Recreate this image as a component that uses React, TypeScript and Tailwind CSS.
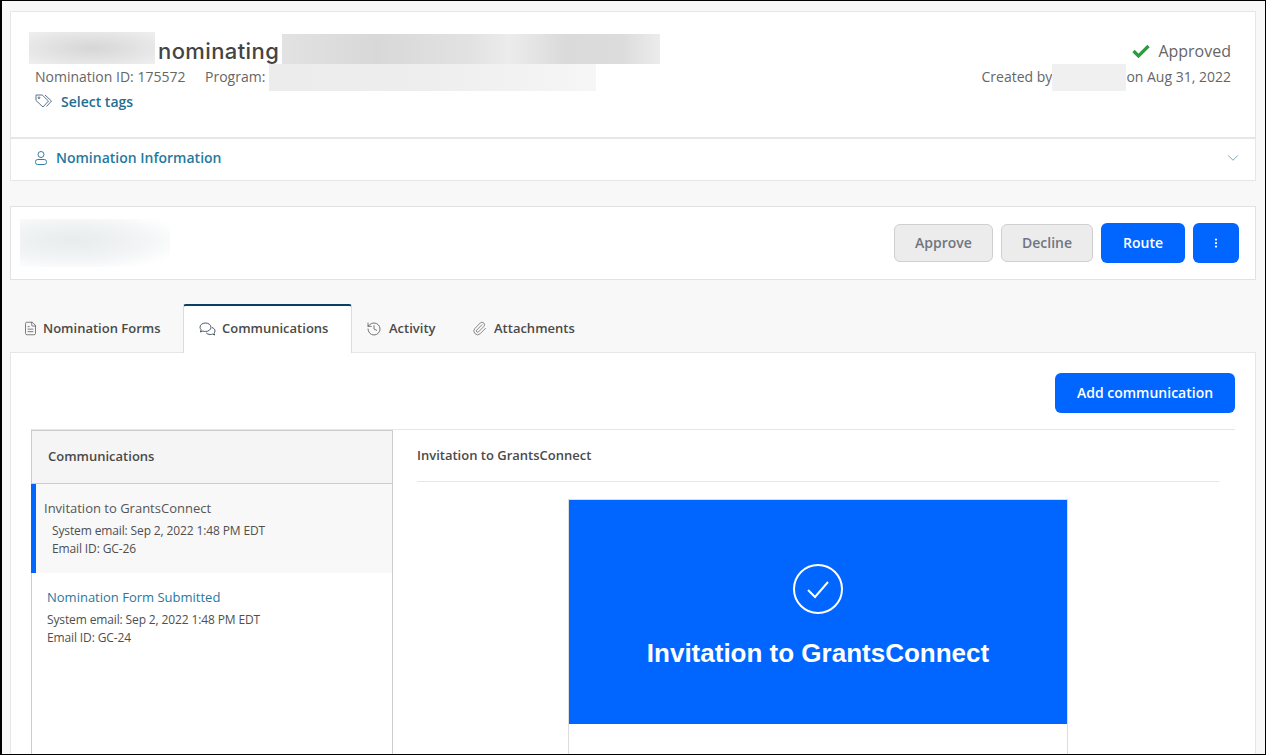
import { ChevronDown, EllipsisVertical, FileText, History, Paperclip } from "lucide-react";

const font = { fontFamily: '"Open Sans", "Noto Sans", sans-serif' };

const ChatIcon = () => (
  <svg width="17" height="14" viewBox="0 0 17 14" fill="none" stroke="#4b5563" strokeWidth="1">
    <path d="M6.5 1C3.5 1 1 2.9 1 5.2c0 1 .5 1.900 1.200 2.600L1.400 10l2.500-1c.8.3 1.700.5 2.600.5 3 0 5.500-1.900 5.500-4.200S9.500 1 6.500 1z" />
    <path d="M13 5.500c1.700.6 3 1.900 3 3.400 0 .9-.4 1.700-1 2.300l.7 1.800-2.200-.9c-.7.3-1.500.4-2.300.4-1.700 0-3.200-.7-4-1.700" />
  </svg>
);

const PersonIcon = () => (
  <svg width="12" height="14" viewBox="0 0 12 14" fill="none" stroke="#2f7fa3" strokeWidth="1" className="mr-[9px] mt-[1px]">
    <circle cx="6" cy="3.500" r="3" />
    <rect x="0.500" y="8.500" width="11" height="5" rx="2.200" />
  </svg>
);

const TagIcon = () => (
  <svg width="18" height="14" viewBox="0 0 18 14" fill="none" stroke="#5b7488" strokeWidth="1" className="mr-[8px]">
    <path d="M1 1h6.200l6.300 6-5.500 6L1 6.500z" />
    <path d="M10 1l6.500 6-5 5.500" />
    <circle cx="4" cy="3.800" r="0.900" />
  </svg>
);

const Tab = ({ icon, label, className }: { icon: React.ReactNode; label: string; className: string }) => (
  <div className={`flex items-center text-[13px] font-semibold text-[#4a4a4a] ${className}`}>
    {icon}
    <span>{label}</span>
  </div>
);

const Mail = ({ title, id, offset, active }: { title: string; id: string; offset: string; active?: boolean }) => (
  <div className={active ? "-ml-[1px] h-[89px] border-l-[5px] border-[#0066ff] bg-[#f8f8f8] pl-[8px] pt-[14px]" : "h-[89px] pl-[15px] pt-[14px]"}>
    <div className={active ? "text-[13px] leading-[20px] text-[#555]" : "text-[13px] leading-[20px] text-[#1f7a9e]"}>{title}</div>
    <div className={`mt-[4px] text-[12px] leading-[18px] tracking-[-0.13px] text-[#4f4f4f] ${offset}`}>
      <div>System email: Sep 2, 2022 1:48 PM EDT</div>
      <div>Email ID: {id}</div>
    </div>
  </div>
);

export default function App() {
  return (
    <div style={font} className="h-screen overflow-hidden border border-l-2 border-black bg-[#f8f8f8] pl-[8px] pr-[9px] pt-[10px]">
      <div className="h-[127px] border border-[#e6e6e6] bg-white pl-[18px] pr-[24px] pt-[20px]">
        <div className="flex justify-between">
          <div>
            <div className="flex h-[32px] items-end">
              <div className="h-[32px] w-[126px] bg-[radial-gradient(ellipse_at_center,#d6d6d6,#efefef)]" />
              <span style={{ fontFamily: "Inter, sans-serif" }} className="ml-[3px] w-[124px] text-[22px] font-medium leading-[26px] tracking-[0.4px] text-[#444]">nominating</span>
              <div className="h-[30px] w-[378px] bg-[linear-gradient(90deg,#e2e2e2,#d8d8d8_25%,#e2e2e2_50%,#ececec_60%,#dadada_75%,#dcdcdc_90%,#ececec)]" />
            </div>
            <div className="flex h-[27px] items-center pb-[2px] pl-[6px] text-[14px] text-[#666]">
              <span className="w-[170px]">Nomination ID: 175572</span>
              <span className="w-[64px]">Program:</span>
              <div className="-mb-[2px] h-[27px] w-[327px] bg-gradient-to-r from-[#ececec] via-[#eeeeee] to-[#f6f6f6]" />
            </div>
            <div className="flex h-[22px] items-center pb-[2px] pl-[6px] text-[14px] font-semibold text-[#1f6f91]">
              <TagIcon />
              Select tags
            </div>
          </div>
          <div className="flex flex-col items-end">
            <div className="flex h-[32px] items-center pt-[6px] text-[16px] text-[#666]">
              <svg width="18" height="14" viewBox="0 0 18 14" fill="none" stroke="#2a9d3f" strokeWidth="3.200" className="mr-[8px]">
                <path d="M1.500 7l5 5L16.500 2" />
              </svg>
              Approved
            </div>
            <div className="flex h-[27px] items-center pb-[2px] text-[14px] text-[#666]">
              <span>Created by</span>
              <div className="-mb-[2px] h-[27px] w-[74px] bg-[#f0f0f0]" />
              <span>on Aug 31, 2022</span>
            </div>
          </div>
        </div>
      </div>

      <div className="flex h-[43px] items-center justify-between border border-[#e6e6e6] bg-white pb-[5px] pl-[24px] pr-[13px]">
        <div className="flex items-center text-[14px] font-semibold text-[#1f7a9e]">
          <PersonIcon />
          Nomination Information
        </div>
        <ChevronDown size={18} strokeWidth={1} className="mt-[2px] text-[#3f8f9f]" />
      </div>

      <div className="mt-[25px] flex h-[74px] items-center justify-between border border-[#e2e2e2] bg-white pl-[9px] pr-[16px]">
        <div className="h-[48px] w-[150px] bg-[radial-gradient(ellipse_at_35%_45%,#e8ecee,#f2f4f5_50%,#ffffff_85%)]" />
        <div className="flex items-center gap-[8px] text-[14px] font-semibold">
          <button className="h-[38px] w-[99px] rounded-[6px] border border-[#cfcfcf] bg-[#ececec] pb-[2px] text-[#6f7680]">Approve</button>
          <button className="h-[38px] w-[92px] rounded-[6px] border border-[#cfcfcf] bg-[#ececec] pb-[2px] text-[#6f7680]">Decline</button>
          <button className="h-[40px] w-[84px] rounded-[6px] bg-[#0066ff] pb-[2px] text-white">Route</button>
          <button className="flex h-[40px] w-[46px] items-center justify-center rounded-[6px] bg-[#0066ff] text-white">
            <EllipsisVertical size={12} strokeWidth={2.5} />
          </button>
        </div>
      </div>

      <div className="mt-[24px] flex h-[48px] items-stretch">
        <Tab className="w-[173px] pl-[13px] pt-[1px]" label="Nomination Forms" icon={<FileText size={15} strokeWidth={1.2} className="mr-[5px] text-[#555]" />} />
        <Tab className="relative z-10 -mb-[1px] w-[169px] rounded-t-[3px] border border-b-0 border-t-[2px] border-[#dcdcdc] border-t-[#0b3f66] bg-white pb-[2px] pl-[15px]" label="Communications" icon={<span className="mr-[6px]"><ChatIcon /></span>} />
        <Tab className="w-[106px] pl-[14px] pt-[1px]" label="Activity" icon={<History size={16} strokeWidth={1.2} className="mr-[7px] text-[#555]" />} />
        <Tab className="pl-[14px] pt-[1px]" label="Attachments" icon={<Paperclip size={15} strokeWidth={1.2} className="mr-[7px] text-[#666]" />} />
      </div>

      <div className="h-[500px] border border-[#e6e6e6] bg-white pl-[20px] pr-[20px] pt-[20px]">
        <div className="flex justify-end">
          <button className="h-[40px] w-[180px] rounded-[6px] bg-[#0066ff] pb-[2px] text-[14px] font-semibold text-white">Add communication</button>
        </div>
        <div className="mt-[16px] flex border-t border-[#e6e6e6]">
          <div className="h-[400px] w-[362px] border-x border-[#cccccc]">
            <div className="flex h-[54px] items-center border-y border-[#cccccc] bg-[#f5f5f5] pl-[16px] text-[13px] font-semibold text-[#4a4a4a]">Communications</div>
            <Mail active title="Invitation to GrantsConnect" id="GC-26" offset="ml-[8px]" />
            <Mail title="Nomination Form Submitted" id="GC-24" offset="" />
          </div>
          <div className="flex-1 pl-[24px] pr-[16px]">
            <div className="flex h-[52px] items-center border-b border-[#e6e6e6] text-[13px] font-semibold text-[#4a4a4a]">Invitation to GrantsConnect</div>
            <div className="mx-auto mt-[17px] w-[500px] border-x border-t border-[#dddddd]">
              <div className="flex h-[224px] flex-col items-center bg-[#0066ff] pt-[64px]">
                <svg width="50" height="50" viewBox="0 0 50 50" fill="none" stroke="white">
                  <circle cx="25" cy="25" r="24" strokeWidth="2" />
                  <path d="M15 26l7 7 13-15" strokeWidth="2" />
                </svg>
                <div style={{ fontFamily: '"Liberation Sans", Arial, sans-serif' }} className="mt-[22px] text-[26px] font-bold leading-[34px] text-white">Invitation to GrantsConnect</div>
              </div>
              <div className="h-[100px] bg-white" />
            </div>
          </div>
        </div>
      </div>
    </div>
  );
}
